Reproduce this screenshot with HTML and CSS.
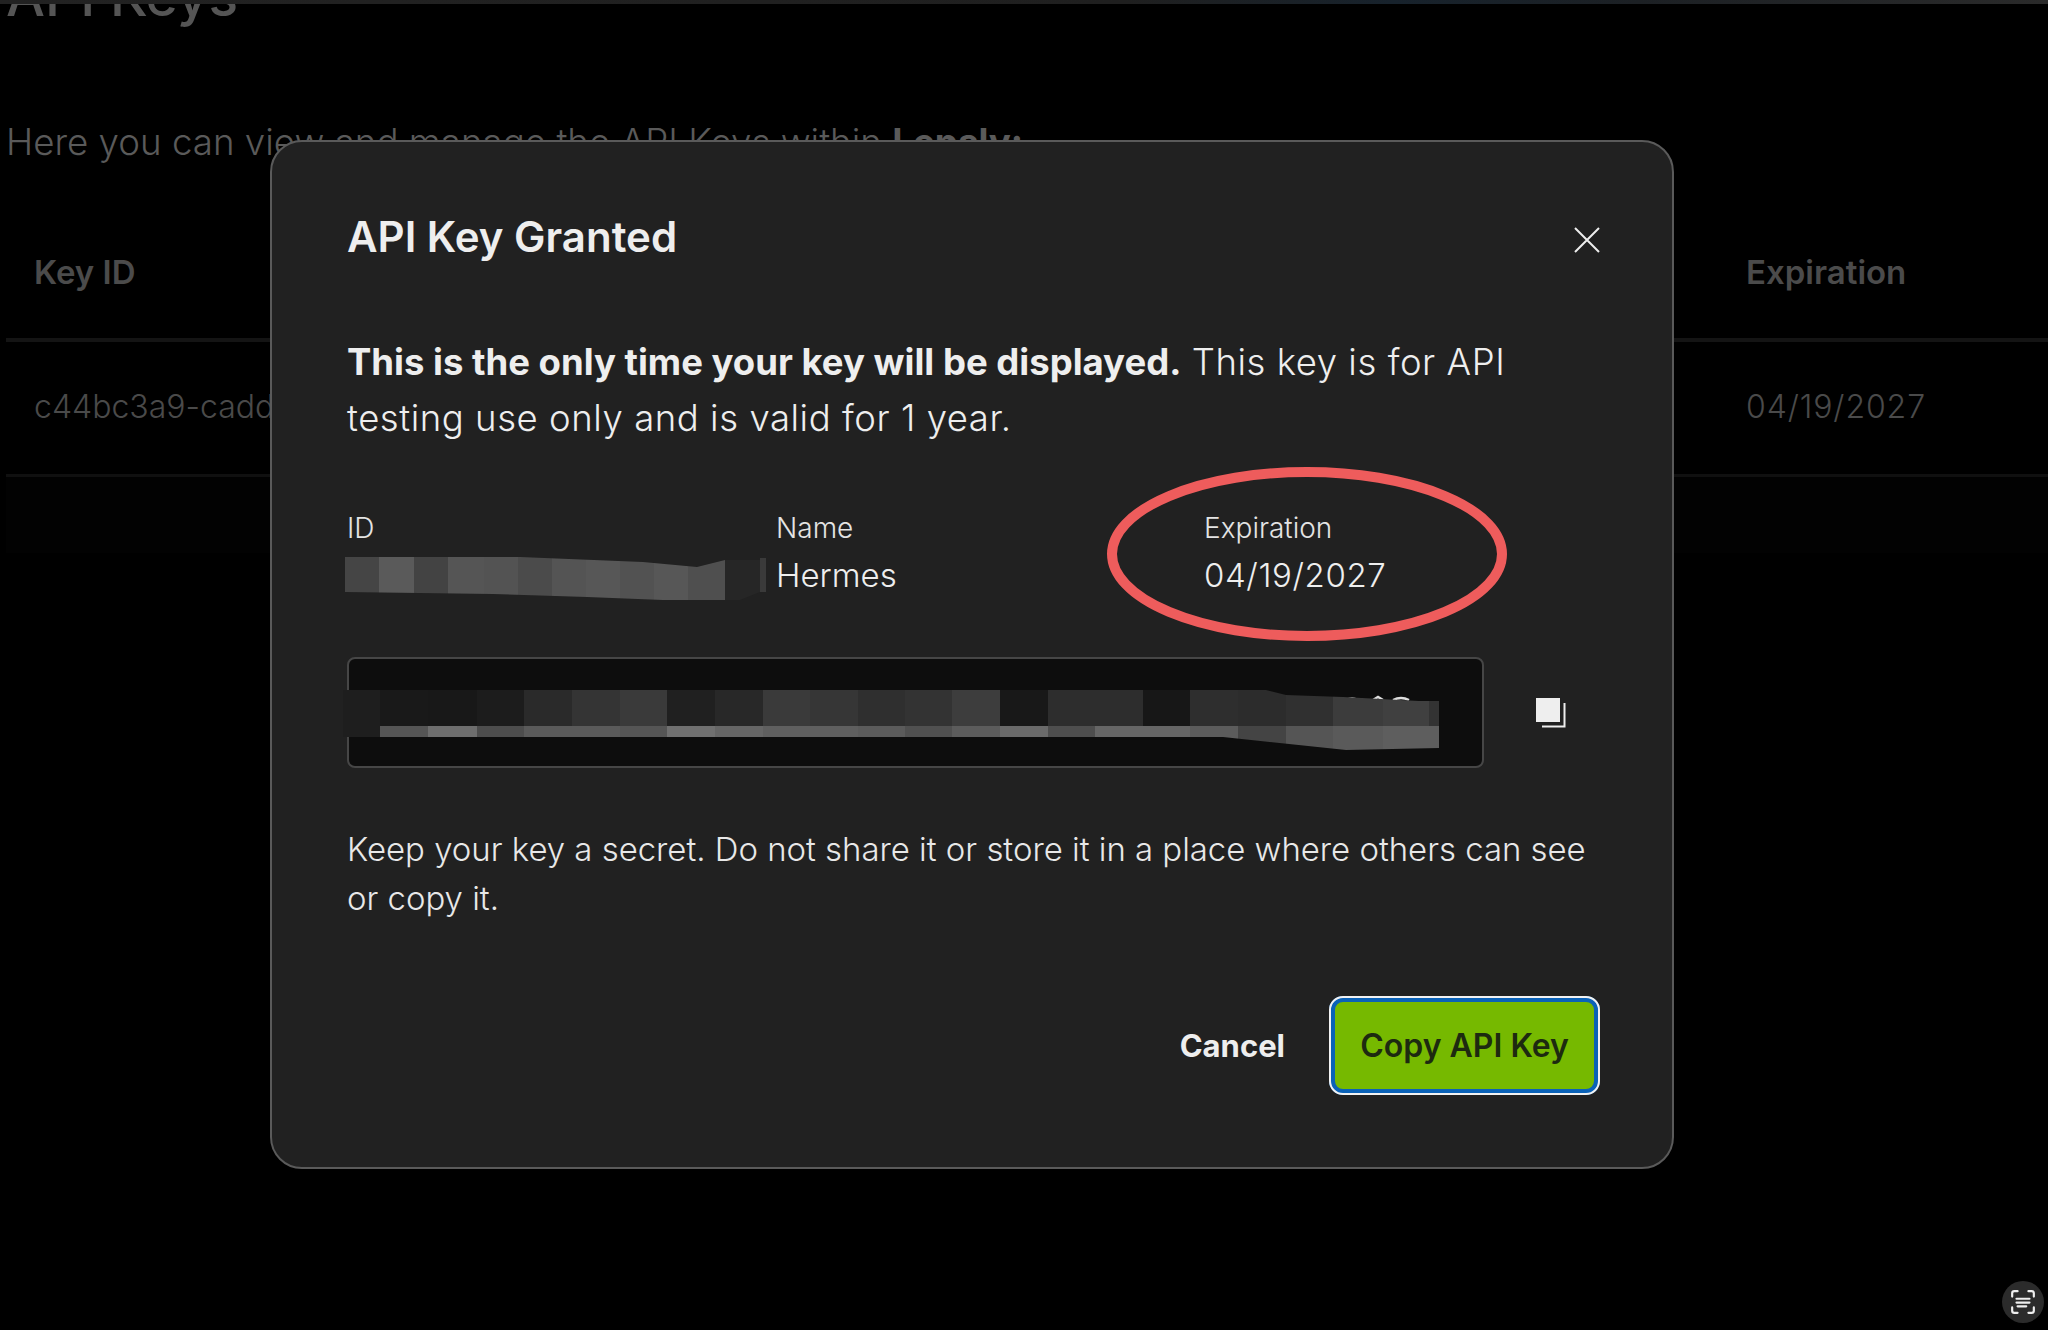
FILE: index.html
```html
<!DOCTYPE html>
<html lang="en">
<head>
<meta charset="utf-8">
<title>API Key Granted</title>
<link rel="stylesheet" href="styles.css">
</head>
<body>
<div class="topbar"></div>
<main class="page">
  <h1 class="page-title">API Keys</h1>
  <p class="page-intro">Here you can view and manage the API Keys within <b>Lepsly:</b></p>
  <div class="table">
    <div class="row head"><span class="col-id">Key ID</span><span class="col-exp">Expiration</span></div>
    <div class="row body"><span class="col-id">c44bc3a9-cadd-4a1e-9d7c</span><span class="col-exp date">04/19/2027</span></div>
    <div class="table-end"></div>
  </div>
</main>
<section class="modal">
  <header class="modal-head">
    <h2>API Key Granted</h2>
    <svg class="close" viewBox="0 0 26 26"><path d="M1 1 25 25M25 1 1 25"/></svg>
  </header>
  <p class="lead"><b>This is the only time your key will be displayed.</b> <span class="lead-rest">This key is for API testing use only and is valid for 1 year.</span></p>
  <div class="meta">
    <div class="meta-id">
      <div class="label">ID</div>
      <svg class="redact-id" viewBox="0 0 421 43">
        <defs><clipPath id="id-mask"><path d="M0 0H175L298 5 352 10 380 3V43H318L242 40 148 37 0 35Z"/></clipPath></defs>
        <g clip-path="url(#id-mask)">
          <rect fill="#454545" x="0" width="34" height="43"/>
          <rect fill="#5a5a5a" x="34" width="35" height="43"/>
          <rect fill="#434343" x="69" width="34" height="43"/>
          <rect fill="#555555" x="103" width="36" height="43"/>
          <rect fill="#535353" x="139" width="34" height="43"/>
          <rect fill="#4b4b4b" x="173" width="34" height="43"/>
          <rect fill="#545454" x="207" width="34" height="43"/>
          <rect fill="#575757" x="241" width="34" height="43"/>
          <rect fill="#525252" x="275" width="34" height="43"/>
          <rect fill="#575757" x="309" width="34" height="43"/>
          <rect fill="#4f4f4f" x="343" width="37" height="43"/>
        </g>
        <path fill="#262626" d="M380 3H415V35L395 43H380Z"/>
        <path fill="#3a3a3a" d="M415 1H421V35H415Z"/>
      </svg>
    </div>
    <div class="meta-name">
      <div class="label">Name</div>
      <div class="value">Hermes</div>
    </div>
    <div class="meta-exp">
      <div class="label">Expiration</div>
      <div class="value date">04/19/2027</div>
    </div>
  </div>
  <div class="key-row">
    <div class="key-field">
      <svg class="redact-key" viewBox="0 0 1096 60">
        <defs><clipPath id="key-mask"><path d="M0 0H923L943 5 1000 7 1076 11H1096V58L1003 60 880 47H0Z"/></clipPath></defs>
        <path class="key-peek" d="M1003 10q6-3 12 0M1030 10l5-3 5 3M1050 10q8-4 16 0"/>
        <g clip-path="url(#key-mask)">
          <rect fill="#1e1e1e" x="0" width="37" height="47"/>
          <rect fill="#191919" x="37" width="48" height="36"/>
          <rect fill="#181818" x="85" width="49" height="36"/>
          <rect fill="#1c1c1c" x="134" width="47" height="36"/>
          <rect fill="#2a2a2a" x="181" width="48" height="36"/>
          <rect fill="#343434" x="229" width="48" height="36"/>
          <rect fill="#3a3a3a" x="277" width="47" height="36"/>
          <rect fill="#202020" x="324" width="48" height="36"/>
          <rect fill="#282828" x="372" width="48" height="36"/>
          <rect fill="#3a3a3a" x="420" width="47" height="36"/>
          <rect fill="#363636" x="467" width="48" height="36"/>
          <rect fill="#2f2f2f" x="515" width="47" height="36"/>
          <rect fill="#333333" x="562" width="47" height="36"/>
          <rect fill="#3d3d3d" x="609" width="48" height="36"/>
          <rect fill="#181818" x="657" width="48" height="36"/>
          <rect fill="#2d2d2d" x="705" width="95" height="36"/>
          <rect fill="#171717" x="800" width="47" height="36"/>
          <rect fill="#2e2e2e" x="847" width="48" height="36"/>
          <rect fill="#2c2c2c" x="895" width="48" height="36"/>
          <rect fill="#303030" x="943" width="47" height="36"/>
          <rect fill="#3c3c3c" x="990" width="50" height="36"/>
          <rect fill="#404040" x="1040" width="46" height="36"/>
          <rect fill="#333333" x="1086" width="10" height="36"/>
          <rect fill="#555555" x="37" y="36" width="48" height="24"/>
          <rect fill="#6e6e6e" x="85" y="36" width="49" height="24"/>
          <rect fill="#4d4d4d" x="134" y="36" width="47" height="24"/>
          <rect fill="#5a5a5a" x="181" y="36" width="96" height="24"/>
          <rect fill="#555555" x="277" y="36" width="47" height="24"/>
          <rect fill="#707070" x="324" y="36" width="48" height="24"/>
          <rect fill="#666666" x="372" y="36" width="48" height="24"/>
          <rect fill="#5f5f5f" x="420" y="36" width="95" height="24"/>
          <rect fill="#5b5b5b" x="515" y="36" width="47" height="24"/>
          <rect fill="#505050" x="562" y="36" width="47" height="24"/>
          <rect fill="#5c5c5c" x="609" y="36" width="48" height="24"/>
          <rect fill="#6a6a6a" x="657" y="36" width="48" height="24"/>
          <rect fill="#4e4e4e" x="705" y="36" width="47" height="24"/>
          <rect fill="#666666" x="752" y="36" width="95" height="24"/>
          <rect fill="#5c5c5c" x="847" y="36" width="48" height="24"/>
          <rect fill="#444444" x="895" y="36" width="48" height="24"/>
          <rect fill="#555555" x="943" y="36" width="47" height="24"/>
          <rect fill="#5a5a5a" x="990" y="36" width="50" height="24"/>
          <rect fill="#5e5e5e" x="1040" y="36" width="56" height="24"/>
        </g>
      </svg>
    </div>
    <svg class="copy" viewBox="0 0 30 30"><path class="copy-back" d="M28.500 5V28.500H6"/><rect class="copy-front" x="0" y="0" width="24" height="24"/></svg>
  </div>
  <p class="note">Keep your key a secret. Do not share it or store it in a place where others can see or copy it.</p>
  <footer class="actions">
    <button class="btn-cancel" type="button">Cancel</button>
    <button class="btn-copy" type="button">Copy API Key</button>
  </footer>
</section>
<svg class="annotation" viewBox="0 0 400 174"><ellipse cx="200" cy="87" rx="195" ry="82"/></svg>
<div class="scan">
  <svg viewBox="0 0 24 24"><path d="M2 7V4a2 2 0 0 1 2-2h3M17 2h3a2 2 0 0 1 2 2v3M2 17v3a2 2 0 0 0 2 2h3M17 22h3a2 2 0 0 0 2-2v-3M6 9h12M6 12.500h12M7 16h8"/></svg>
</div>
</body>
</html>
```

FILE: styles.css
```css
* { box-sizing: border-box; }
html, body { margin: 0; height: 100%; }
body {
  background: #000;
  color: #eee;
  font-family: Inter, "Noto Sans", "Liberation Sans", sans-serif;
  overflow: hidden;
  position: relative;
}
.topbar {
  height: 4px;
  background: linear-gradient(90deg, #222 0%, #1f1f1f 55%, #17222c 68%, #1c2024 80%, #2a2a2a 100%);
}
.page { padding: 0 0 0 6px; height: 1326px; overflow: hidden; }
.page-title {
  margin: -37px 0 0 0;
  height: 58px;
  font-size: 55px;
  line-height: 58px;
  font-weight: 500;
  color: #555;
}
.page-intro {
  margin: 96px 0 0 0;
  font-size: 36.700px;
  line-height: 42px;
  font-weight: 300;
  color: #5a5a5a;
  white-space: nowrap;
}
.page-intro b { font-weight: 700; }
.table { margin-top: 45px; }
.row {
  display: flex;
  justify-content: space-between;
  align-items: center;
  padding: 0 0 0 28px;
}
.col-exp { width: 302px; flex: none; }
.date { letter-spacing: 0.9px; }
.row.head { height: 134px; padding-bottom: 2px; border-bottom: 4px solid #141414; font-size: 33px; font-weight: 600; color: #4b4b4b; }
.row.body { height: 135px; padding-bottom: 3px; border-bottom: 3px solid #101010; font-size: 32px; font-weight: 300; color: #4a4a4a; }
.table-end { height: 76px; background: #020202; }
.modal {
  position: absolute;
  left: 270px;
  top: 140px;
  width: 1404px;
  height: 1029px;
  background: #212121;
  border: 2px solid #5a5a5a;
  border-radius: 32px;
  padding: 70px 72px 0 75px;
}
.modal-head { display: flex; justify-content: space-between; align-items: flex-start; height: 70px; }
.modal-head h2 { margin: 0; font-size: 42px; line-height: 50px; font-weight: 600; color: #eee; }
.close { width: 26px; height: 26px; margin-top: 15px; flex: none; }
.close path { fill: none; stroke: #eee; stroke-width: 2; }
.lead { margin: 52px 0 0 0; font-size: 36.500px; line-height: 56px; font-weight: 300; width: 1240px; color: #eee; }
.lead b { font-weight: 700; }
.lead-rest { letter-spacing: 0.55px; }
.meta { display: flex; margin-top: 60px; height: 106px; }
.meta-id { width: 429px; }
.meta-name { width: 428px; }
.label { font-size: 28px; line-height: 44px; font-weight: 300; color: #e4e4e4; }
.value { margin-top: 1px; font-size: 33px; line-height: 48px; font-weight: 300; color: #eee; }
.value.date { letter-spacing: 0.6px; }
.redact-id { display: block; width: 421px; height: 43px; margin: 7px 0 0 -2px; }
.key-row { display: flex; align-items: center; gap: 52px; margin-top: 45px; }
.key-field {
  width: 1137px;
  height: 111px;
  background: #0d0d0d;
  border: 2px solid #464646;
  border-radius: 8px;
  padding-top: 31px;
}
.redact-key { display: block; width: 1096px; height: 60px; margin-left: -6px; overflow: visible; }
.key-peek { fill: none; stroke: #ddd; stroke-width: 2.500; }
.copy { width: 30px; height: 30px; flex: none; }
.copy-back { fill: none; stroke: #eee; stroke-width: 2; }
.copy-front { fill: #eee; }
.note { margin: 57px 0 0 0; font-size: 32.900px; line-height: 49px; font-weight: 300; color: #e8e8e8; width: 1260px; }
.actions { display: flex; justify-content: flex-end; align-items: center; gap: 44px; margin-top: 73px; }
.btn-cancel { background: none; border: 0; padding: 0; font: inherit; font-size: 31px; font-weight: 700; color: #eee; }
.btn-copy {
  width: 271px;
  height: 99px;
  background: #76b900;
  border: 6px solid #0a62b8;
  outline: 2px solid #f2f2f2;
  outline-offset: -2px;
  border-radius: 14px;
  font: inherit;
  font-size: 32px;
  font-weight: 600;
  color: #1d2a10;
}
.annotation {
  position: absolute;
  left: 1107px;
  top: 467px;
  width: 400px;
  height: 174px;
}
.annotation ellipse { fill: none; stroke: #ee5c5c; stroke-width: 10; }
.scan {
  position: absolute;
  left: 2002px;
  top: 1281px;
  width: 42px;
  height: 42px;
  border-radius: 50%;
  background: #2b2b2b;
  display: flex;
  align-items: center;
  justify-content: center;
}
.scan svg { width: 26px; height: 26px; }
.scan path { fill: none; stroke: #eee; stroke-width: 2; stroke-linecap: round; }
```
